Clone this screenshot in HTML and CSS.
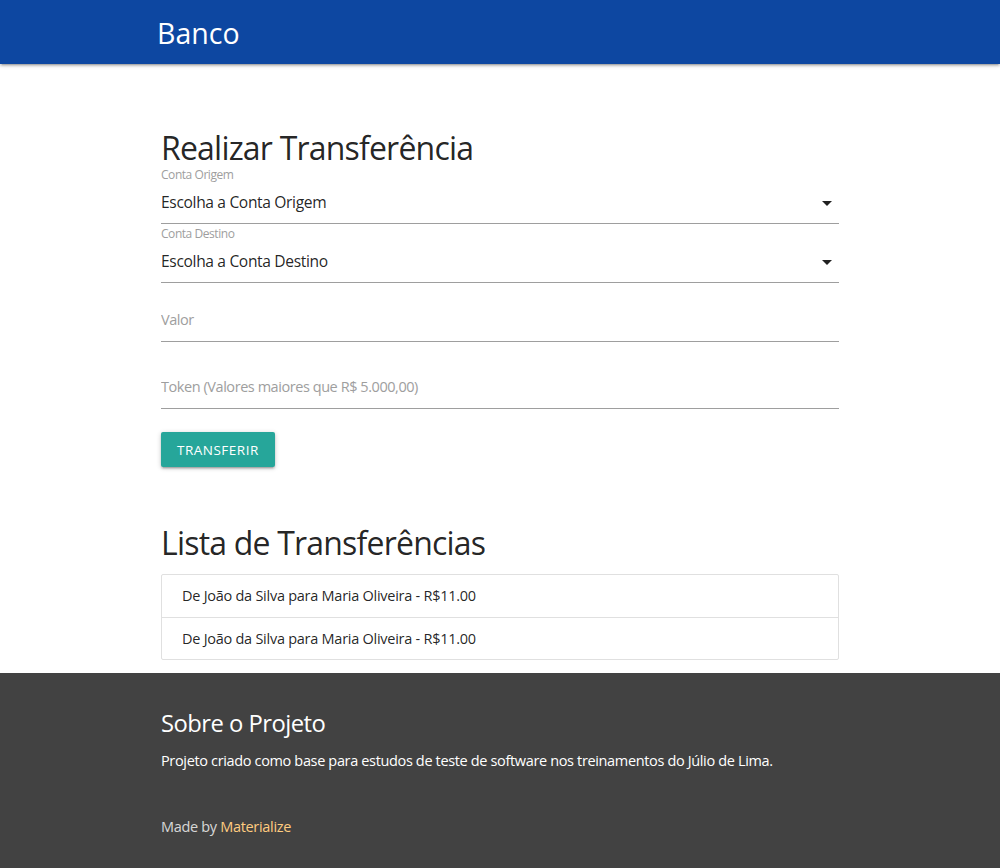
FILE: index.html
```html
<!DOCTYPE html>
<html lang="pt-BR">
<head>
<meta charset="utf-8">
<title>Banco</title>
<link rel="stylesheet" href="styles.css">
</head>
<body>
<nav class="nav">
  <div class="nav-inner">
    <a class="brand" href="#">Banco</a>
  </div>
</nav>
<main class="container">
  <section class="transfer">
    <h4 class="title title-first">Realizar Transferência</h4>
    <div class="select-field">
      <label class="select-label">Conta Origem</label>
      <div class="select">
        <span>Escolha a Conta Origem</span>
        <svg class="caret" width="24" height="24" viewBox="0 0 24 24"><path d="M7 10l5 5 5-5z"/></svg>
      </div>
    </div>
    <div class="select-field select-field-next">
      <label class="select-label">Conta Destino</label>
      <div class="select">
        <span>Escolha a Conta Destino</span>
        <svg class="caret" width="24" height="24" viewBox="0 0 24 24"><path d="M7 10l5 5 5-5z"/></svg>
      </div>
    </div>
    <div class="input-field input-valor">
      <input type="text" placeholder="Valor">
    </div>
    <div class="input-field input-token">
      <input type="text" placeholder="Token (Valores maiores que R$ 5.000,00)">
    </div>
    <button class="btn" type="button">Transferir</button>
  </section>
  <section class="list">
    <h4 class="title title-list">Lista de Transferências</h4>
    <ul class="collection">
      <li class="collection-item">De João da Silva para Maria Oliveira - R$11.00</li>
      <li class="collection-item">De João da Silva para Maria Oliveira - R$11.00</li>
    </ul>
  </section>
</main>
<footer class="footer">
  <div class="container">
    <h5 class="footer-title">Sobre o Projeto</h5>
    <p class="footer-text">Projeto criado como base para estudos de teste de software nos treinamentos do Júlio de Lima.</p>
    <div class="footer-copy">Made by <a class="footer-link" href="#">Materialize</a></div>
  </div>
</footer>
</body>
</html>
```

FILE: styles.css
```css
* { box-sizing: border-box; }

html, body {
  margin: 0;
  padding: 0;
}

body {
  font-family: "Open Sans", "Noto Sans", sans-serif;
  font-size: 14.5px;
  letter-spacing: -0.3px;
  color: rgba(0, 0, 0, 0.87);
  background: #fff;
  line-height: 1.5;
}

.nav {
  height: 64px;
  background: #0d47a1;
  box-shadow: 0 2px 2px 0 rgba(0,0,0,0.14), 0 3px 1px -2px rgba(0,0,0,0.12), 0 1px 5px 0 rgba(0,0,0,0.2);
}

.nav-inner {
  width: 700px;
  margin: 0 auto;
  padding-left: 7px;
  padding-top: 1px;
  height: 64px;
  display: flex;
  align-items: center;
}

.brand {
  color: #fff;
  text-decoration: none;
  font-size: 28.5px;
  letter-spacing: 0;
  line-height: 62px;
}

.container {
  width: 700px;
  margin: 0 auto;
  padding: 0 11px;
}

.title {
  font-weight: 400;
  font-size: 32px;
  letter-spacing: -0.8px;
  line-height: 36px;
  margin: 0;
}

.title-first {
  margin-top: 66px;
  margin-bottom: 2px;
}

.select-label {
  display: block;
  font-size: 12px;
  letter-spacing: -0.45px;
  line-height: 14px;
  color: #9e9e9e;
}

.select-field-next {
  margin-top: 3px;
}

.select {
  height: 42px;
  border-bottom: 1px solid #9e9e9e;
  display: flex;
  align-items: center;
  justify-content: space-between;
  font-size: 15.6px;
  letter-spacing: -0.35px;
  padding-top: 1px;
}

.caret {
  fill: rgba(0,0,0,0.87);
  display: block;
}

.input-field input {
  display: block;
  width: 100%;
  height: 44px;
  border: none;
  border-bottom: 1px solid #9e9e9e;
  outline: none;
  padding: 0;
  font-family: inherit;
  font-size: 14.5px;
  letter-spacing: -0.44px;
  color: rgba(0,0,0,0.87);
  background: transparent;
}

.input-field input::placeholder {
  color: #9e9e9e;
  opacity: 1;
}

.input-valor { margin-top: 15px; }
.input-token { margin-top: 23px; }

.btn {
  margin-top: 23px;
  height: 35px;
  padding: 0 16px;
  border: none;
  border-radius: 2px;
  background: #26a69a;
  color: #fff;
  font-family: inherit;
  font-size: 13.5px;
  text-transform: uppercase;
  letter-spacing: 0.5px;
  box-shadow: 0 2px 2px 0 rgba(0,0,0,0.14), 0 3px 1px -2px rgba(0,0,0,0.12), 0 1px 5px 0 rgba(0,0,0,0.2);
  display: block;
}

.title-list {
  margin-top: 58px;
  margin-bottom: 13px;
}

.collection {
  list-style: none;
  margin: 0 0 13px;
  padding: 0;
  border: 1px solid #e0e0e0;
  border-radius: 2px;
}

.collection-item {
  padding: 10px 20px;
  line-height: 21.5px;
  letter-spacing: -0.26px;
  border-bottom: 1px solid #e0e0e0;
}

.collection-item:last-child {
  border-bottom: none;
}

.footer {
  background: #424242;
  color: #fff;
  padding-top: 37px;
  padding-bottom: 30px;
}

.footer-title {
  font-size: 23.8px;
  letter-spacing: -0.53px;
  font-weight: 400;
  line-height: 26px;
  margin: 0;
}

.footer-text {
  margin: 14px 0 0;
  letter-spacing: -0.35px;
  line-height: 21.75px;
}

.footer-copy {
  margin-top: 44px;
  line-height: 21.75px;
  letter-spacing: -0.32px;
  color: rgba(255,255,255,0.8);
}

.footer-link {
  color: #ffcc80;
  text-decoration: none;
}
```
